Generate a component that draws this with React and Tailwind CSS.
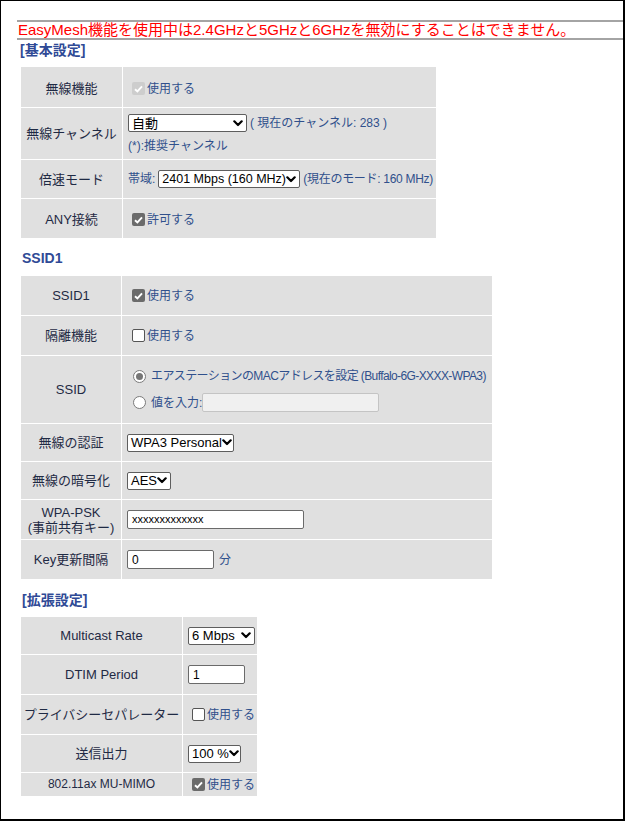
import React from "react";

const FONT = "font-['Liberation_Sans','Noto_Sans_CJK_JP',sans-serif]";

function Chevron() {
  return (
    <svg width="10" height="7" viewBox="0 0 10 7" className="shrink-0">
      <path d="M1.3 1.3 L5 5 L8.7 1.3" fill="none" stroke="#000" strokeWidth="2.2" strokeLinecap="round" strokeLinejoin="round" />
    </svg>
  );
}

function Select({ value, className = "" }) {
  return (
    <span className={`inline-flex shrink-0 items-center justify-between h-[18px] border border-[#5e5e5e] rounded-[2px] bg-white pl-[3px] pr-[3px] text-[13px] leading-none text-black whitespace-nowrap ${className}`}>
      <span>{value}</span>
      <Chevron />
    </span>
  );
}

function TextBox({ value, className = "", disabled }) {
  return (
    <span
      className={`inline-flex shrink-0 items-center h-[19px] rounded-[2px] pl-[4px] text-[12px] leading-none text-black ${
        disabled ? "bg-[#f0f0f0] border border-[#c4c4c4]" : "bg-white border border-[#6a6a6a]"
      } ${className}`}
    >
      {value}
    </span>
  );
}

function Check({ state }) {
  if (state === "off") {
    return <span className="inline-block shrink-0 w-[13px] h-[13px] border border-[#555] rounded-[2px] bg-white" />;
  }
  return (
    <span
      className={`inline-flex shrink-0 items-center justify-center w-[13px] h-[13px] rounded-[2px] ${
        state === "on" ? "bg-[#6b6b6b]" : "bg-[#cdcdcd]"
      }`}
    >
      <svg width="9" height="8" viewBox="0 0 9 8">
        <path d="M1 4.2 L3.4 6.5 L8 1.3" stroke="#fff" strokeWidth="1.9" fill="none" />
      </svg>
    </span>
  );
}

function Radio({ on }) {
  return (
    <span className="inline-flex shrink-0 items-center justify-center w-[13px] h-[13px] rounded-full border border-[#7a7a7a] bg-white">
      {on && <span className="w-[7px] h-[7px] rounded-full bg-[#767676]" />}
    </span>
  );
}

function Label({ children, className = "" }) {
  return (
    <div className={`bg-[#e0e0e0] flex items-center justify-center text-center whitespace-nowrap text-[13px] leading-[15px] text-[#1f2a44] ${className}`}>
      {children}
    </div>
  );
}

function Value({ children, className = "" }) {
  return (
    <div className={`bg-[#e0e0e0] flex items-center whitespace-nowrap text-[12px] text-[#30508c] ${className}`}>{children}</div>
  );
}

function Heading({ children, className = "" }) {
  return (
    <div className={`h-[20px] leading-[20px] text-[14px] font-bold text-[#2f4a96] ${className}`}>{children}</div>
  );
}

export default function App() {
  return (
    <div className={`w-[625px] h-[821px] border-l border-t border-r-2 border-b-2 border-black bg-white ${FONT}`}>
      {/* notice bar */}
      <div className="ml-[16px] mt-[19px] border-y-2 border-[#a4a4a4] h-[20px] pl-[1px] text-[15px] leading-[16px] text-[#ff0000] whitespace-nowrap">
        EasyMesh機能を使用中は2.4GHzと5GHzと6GHzを無効にすることはできません。
      </div>

      <Heading className="pl-[19px]">[基本設定]</Heading>

      <div className="ml-[20px] mt-[7px] w-[415px] grid grid-cols-[101px_313px] grid-rows-[40px_51px_38px_39px] gap-px">
        <Label className="pt-[3px]">無線機能</Label>
        <Value className="pl-[9px] pt-[3px] gap-[2px]">
          <Check state="dis" />
          <span>使用する</span>
        </Value>

        <Label>無線チャンネル</Label>
        <Value className="pl-[5px] flex-col !items-start justify-center gap-[8px]">
          <div className="flex items-center gap-[3px]">
            <Select value="自動" className="w-[119px]" />
            <span>( 現在のチャンネル: 283 )</span>
          </div>
          <span className="leading-[13px]">(*):推奨チャンネル</span>
        </Value>

        <Label>倍速モード</Label>
        <Value className="pl-[5px] gap-[3px]">
          <span>帯域:</span>
          <Select value="2401 Mbps (160 MHz)" className="w-[142px] !text-[12.5px]" />
          <span className="tracking-[-0.3px]">(現在のモード: 160 MHz)</span>
        </Value>

        <Label className="pt-[2px]">ANY接続</Label>
        <Value className="pl-[9px] pt-[2px] gap-[2px]">
          <Check state="on" />
          <span>許可する</span>
        </Value>
      </div>

      <Heading className="pl-[21px] mt-[10px]">SSID1</Heading>

      <div className="ml-[20px] mt-[8px] w-[471px] grid grid-cols-[100px_370px] grid-rows-[39px_39px_67px_37px_37px_39px_39px] gap-px">
        <Label>SSID1</Label>
        <Value className="pl-[10px] gap-[2px]">
          <Check state="on" />
          <span>使用する</span>
        </Value>

        <Label>隔離機能</Label>
        <Value className="pl-[10px] gap-[2px]">
          <Check state="off" />
          <span>使用する</span>
        </Value>

        <Label>SSID</Label>
        <Value className="pl-[11px] flex-col !items-start justify-center gap-[8px]">
          <div className="flex items-center gap-[5px]">
            <Radio on />
            <span className="tracking-[-0.6px]">エアステーションのMACアドレスを設定 (Buffalo-6G-XXXX-WPA3)</span>
          </div>
          <div className="flex items-center gap-[5px]">
            <Radio />
            <span>値を入力:</span>
            <TextBox disabled className="w-[177px] -ml-[5px]" />
          </div>
        </Value>

        <Label>無線の認証</Label>
        <Value className="pl-[5px]">
          <Select value="WPA3 Personal" className="w-[107px]" />
        </Value>

        <Label>無線の暗号化</Label>
        <Value className="pl-[5px]">
          <Select value="AES" className="w-[44px]" />
        </Value>

        <Label className="flex-col">
          <span>WPA-PSK</span>
          <span>(事前共有キー)</span>
        </Label>
        <Value className="pl-[5px]">
          <TextBox value="xxxxxxxxxxxxx" className="w-[177px] !text-[11px]" />
        </Value>

        <Label>Key更新間隔</Label>
        <Value className="pl-[5px] gap-[5px]">
          <TextBox value="0" className="w-[87px]" />
          <span>分</span>
        </Value>
      </div>

      <Heading className="pl-[21px] mt-[11px]">[拡張設定]</Heading>

      <div className="ml-[20px] mt-[7px] w-[236px] grid grid-cols-[161px_74px] grid-rows-[37px_39px_39px_37px_23px] gap-px">
        <Label>Multicast Rate</Label>
        <Value className="pl-[5px]">
          <Select value="6 Mbps" className="w-[67px]" />
        </Value>

        <Label>DTIM Period</Label>
        <Value className="pl-[5px]">
          <TextBox value="1" className="w-[57px]" />
        </Value>

        <Label>プライバシーセパレーター</Label>
        <Value className="pl-[9px] gap-[2px]">
          <Check state="off" />
          <span>使用する</span>
        </Value>

        <Label>送信出力</Label>
        <Value className="pl-[5px]">
          <Select value="100 %" className="w-[53px]" />
        </Value>

        <Label className="!text-[12px]">802.11ax MU-MIMO</Label>
        <Value className="pl-[9px] gap-[2px]">
          <Check state="on" />
          <span>使用する</span>
        </Value>
      </div>
    </div>
  );
}
